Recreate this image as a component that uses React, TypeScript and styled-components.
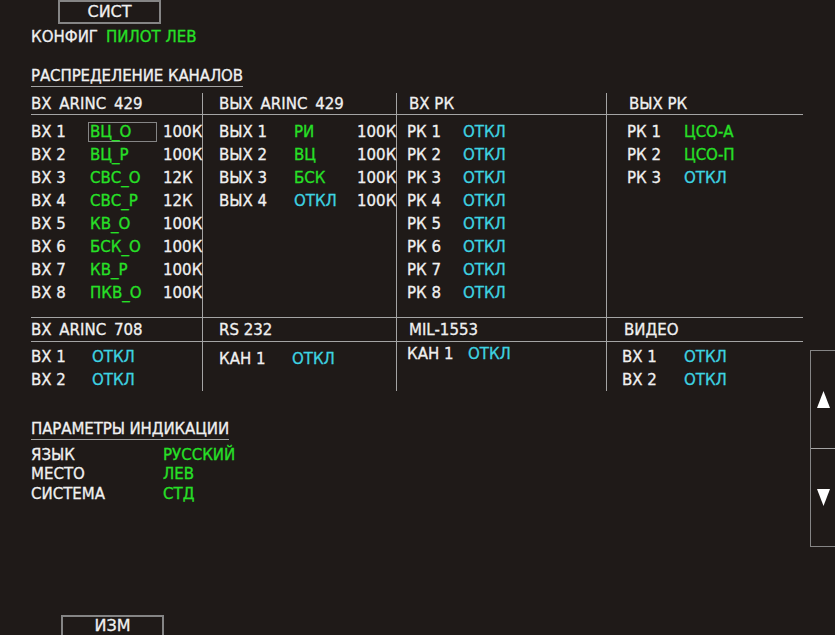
import React from 'react';
import styled, { createGlobalStyle } from 'styled-components';

// ---------------------------------------------------------------------------
// palette
// ---------------------------------------------------------------------------

const BG = '#1f1a18';
const WHITE = '#f0f0f0';
const GREEN = '#27e027';
const CYAN = '#3ed4e2';
const LINE = '#a4a4a4';
const FRAME = '#858585';

const GlobalStyle = createGlobalStyle`
  html, body {
    margin: 0;
    padding: 0;
    background: ${BG};
  }
  * { box-sizing: border-box; }
`;

// ---------------------------------------------------------------------------
// layout
// ---------------------------------------------------------------------------

const Screen = styled.div`
  width: 835px;
  height: 635px;
  overflow: hidden;
  display: flex;
  background: ${BG};
  color: ${WHITE};
  font-family: 'DejaVu Sans', 'Liberation Sans', sans-serif;
  font-size: 15px;
  line-height: 18px;
  -webkit-text-stroke: 0.3px currentColor;
`;

const Main = styled.div`
  flex: none;
  width: 810px;
  height: 635px;
  display: flex;
  flex-direction: column;
`;

const SoftKey = styled.div<{ $bottom?: boolean }>`
  flex: none;
  width: 103px;
  height: ${(p) => (p.$bottom ? '20px' : '24px')};
  margin-left: ${(p) => (p.$bottom ? '61px' : '58px')};
  margin-top: ${(p) => (p.$bottom ? 'auto' : '0')};
  border: 2px solid ${FRAME};
  border-bottom: ${(p) => (p.$bottom ? 'none' : `2px solid ${FRAME}`)};
  display: flex;
  justify-content: center;
  align-items: ${(p) => (p.$bottom ? 'flex-end' : 'center')};
  font-size: 16px;
  color: ${WHITE};
`;

const ConfigLine = styled.div`
  padding-left: 31px;
  margin-top: 3px;
  line-height: 20px;
  display: flex;
  gap: 8px;
`;

const Value = styled.span<{ $tone?: 'green' | 'cyan' }>`
  color: ${(p) => (p.$tone === 'cyan' ? CYAN : GREEN)};
`;

const SectionTitle = styled.div<{ $top: number }>`
  align-self: flex-start;
  margin-left: 31px;
  margin-top: ${(p) => p.$top}px;
  padding-bottom: 1px;
  border-bottom: 1px solid ${LINE};
  letter-spacing: -0.1px;
`;

const ChannelGrid = styled.div`
  margin-top: 6px;
  margin-left: 31px;
  width: 772px;
  display: grid;
  grid-template-columns: 172px 194px 210px 196px;
  grid-template-rows: 22px 202px 25px 49px;
`;

const Cell = styled.div<{ $kind: 'head' | 'body' | 'head2'; $pad: number; $last?: boolean; $top?: number }>`
  padding-left: ${(p) => p.$pad}px;
  padding-top: ${(p) => p.$top ?? 0}px;
  border-right: ${(p) => (p.$last ? 'none' : `1px solid ${LINE}`)};
  border-top: ${(p) => (p.$kind === 'head2' ? `1px solid ${LINE}` : 'none')};
  border-bottom: ${(p) => (p.$kind === 'body' ? 'none' : `1px solid ${LINE}`)};
  display: flex;
  flex-direction: column;
  justify-content: ${(p) => (p.$kind === 'body' ? 'flex-start' : 'center')};
`;

const HeadText = styled.span`
  word-spacing: 3px;
`;

const Row = styled.div<{ $cols: string; $h: number }>`
  display: grid;
  grid-template-columns: ${(p) => p.$cols};
  height: ${(p) => p.$h}px;
  align-items: center;
  white-space: nowrap;
`;

const ChanValue = styled.span<{ $tone: 'green' | 'cyan'; $selected?: boolean }>`
  color: ${(p) => (p.$tone === 'cyan' ? CYAN : GREEN)};
  justify-self: start;
  width: ${(p) => (p.$selected ? '69px' : 'auto')};
  height: 20px;
  line-height: 18px;
  margin-left: -1px;
  padding-left: 1px;
  border: 1px solid ${(p) => (p.$selected ? FRAME : 'transparent')};
`;

const ParamList = styled.div`
  margin-top: 5px;
  padding-left: 31px;
  display: flex;
  flex-direction: column;
`;

const ParamRow = styled.div`
  display: grid;
  grid-template-columns: 132px auto;
  height: 19.5px;
  align-items: center;
`;

const Rail = styled.div`
  flex: none;
  width: 25px;
  padding-top: 350px;
`;

const ScrollBox = styled.div`
  width: 30px;
  height: 197px;
  border: 1px solid ${FRAME};
  display: flex;
  flex-direction: column;
`;

const ScrollKey = styled.div<{ $first?: boolean }>`
  flex: 1;
  display: flex;
  align-items: center;
  padding-left: 6px;
  border-bottom: ${(p) => (p.$first ? `1px solid ${LINE}` : 'none')};
`;

// ---------------------------------------------------------------------------
// data
// ---------------------------------------------------------------------------

type Tone = 'green' | 'cyan';
type Chan = { label: string; value: string; tone: Tone; speed?: string; selected?: boolean };

const arincIn: Chan[] = [
  { label: 'ВХ 1', value: 'ВЦ_О', tone: 'green', speed: '100К', selected: true },
  { label: 'ВХ 2', value: 'ВЦ_Р', tone: 'green', speed: '100К' },
  { label: 'ВХ 3', value: 'СВС_О', tone: 'green', speed: '12К' },
  { label: 'ВХ 4', value: 'СВС_Р', tone: 'green', speed: '12К' },
  { label: 'ВХ 5', value: 'КВ_О', tone: 'green', speed: '100К' },
  { label: 'ВХ 6', value: 'БСК_О', tone: 'green', speed: '100К' },
  { label: 'ВХ 7', value: 'КВ_Р', tone: 'green', speed: '100К' },
  { label: 'ВХ 8', value: 'ПКВ_О', tone: 'green', speed: '100К' },
];

const arincOut: Chan[] = [
  { label: 'ВЫХ 1', value: 'РИ', tone: 'green', speed: '100К' },
  { label: 'ВЫХ 2', value: 'ВЦ', tone: 'green', speed: '100К' },
  { label: 'ВЫХ 3', value: 'БСК', tone: 'green', speed: '100К' },
  { label: 'ВЫХ 4', value: 'ОТКЛ', tone: 'cyan', speed: '100К' },
];

const rkIn: Chan[] = [1, 2, 3, 4, 5, 6, 7, 8].map((n) => ({
  label: `РК ${n}`,
  value: 'ОТКЛ',
  tone: 'cyan' as Tone,
}));

const rkOut: Chan[] = [
  { label: 'РК 1', value: 'ЦСО-А', tone: 'green' },
  { label: 'РК 2', value: 'ЦСО-П', tone: 'green' },
  { label: 'РК 3', value: 'ОТКЛ', tone: 'cyan' },
];

const arinc708: Chan[] = [
  { label: 'ВХ 1', value: 'ОТКЛ', tone: 'cyan' },
  { label: 'ВХ 2', value: 'ОТКЛ', tone: 'cyan' },
];

const rs232: Chan[] = [{ label: 'КАН 1', value: 'ОТКЛ', tone: 'cyan' }];
const mil1553: Chan[] = [{ label: 'КАН 1', value: 'ОТКЛ', tone: 'cyan' }];
const video: Chan[] = arinc708;

const params = [
  { label: 'ЯЗЫК', value: 'РУССКИЙ' },
  { label: 'МЕСТО', value: 'ЛЕВ' },
  { label: 'СИСТЕМА', value: 'СТД' },
];

// ---------------------------------------------------------------------------
// components
// ---------------------------------------------------------------------------

const ChannelRows: React.FC<{ items: Chan[]; cols: string; h: number }> = ({ items, cols, h }) => (
  <>
    {items.map((c) => (
      <Row key={c.label} $cols={cols} $h={h}>
        <span>{c.label}</span>
        <ChanValue $tone={c.tone} $selected={c.selected}>
          {c.value}
        </ChanValue>
        {c.speed && <span>{c.speed}</span>}
      </Row>
    ))}
  </>
);

const Triangle: React.FC<{ down?: boolean }> = ({ down }) => (
  <svg width="13" height="17" viewBox="0 0 13 17">
    <polygon points={down ? '0,0 13,0 6.5,17' : '6.5,0 13,17 0,17'} fill="#ffffff" />
  </svg>
);

const App: React.FC = () => (
  <>
    <GlobalStyle />
    <Screen>
      <Main>
        <SoftKey>СИСТ</SoftKey>

        <ConfigLine>
          <span>КОНФИГ</span>
          <Value>ПИЛОТ ЛЕВ</Value>
        </ConfigLine>

        <SectionTitle $top={20}>РАСПРЕДЕЛЕНИЕ КАНАЛОВ</SectionTitle>

        <ChannelGrid>
          <Cell $kind="head" $pad={0}><HeadText>ВХ ARINC 429</HeadText></Cell>
          <Cell $kind="head" $pad={16}><HeadText>ВЫХ ARINC 429</HeadText></Cell>
          <Cell $kind="head" $pad={12}><span>ВХ РК</span></Cell>
          <Cell $kind="head" $pad={22} $last><span>ВЫХ РК</span></Cell>

          <Cell $kind="body" $pad={0} $top={5}>
            <ChannelRows items={arincIn} cols="58px 74px auto" h={23} />
          </Cell>
          <Cell $kind="body" $pad={16} $top={5}>
            <ChannelRows items={arincOut} cols="74px 64px auto" h={23} />
          </Cell>
          <Cell $kind="body" $pad={10} $top={5}>
            <ChannelRows items={rkIn} cols="55px auto" h={23} />
          </Cell>
          <Cell $kind="body" $pad={20} $top={5} $last>
            <ChannelRows items={rkOut} cols="56px auto" h={23} />
          </Cell>

          <Cell $kind="head2" $pad={0}><HeadText>ВХ ARINC 708</HeadText></Cell>
          <Cell $kind="head2" $pad={16}><span>RS 232</span></Cell>
          <Cell $kind="head2" $pad={12}><span>MIL-1553</span></Cell>
          <Cell $kind="head2" $pad={17} $last><span>ВИДЕО</span></Cell>

          <Cell $kind="body" $pad={0} $top={4}>
            <ChannelRows items={arinc708} cols="60px auto" h={24} />
          </Cell>
          <Cell $kind="body" $pad={16} $top={5}>
            <ChannelRows items={rs232} cols="72px auto" h={24} />
          </Cell>
          <Cell $kind="body" $pad={10} $top={0}>
            <ChannelRows items={mil1553} cols="60px auto" h={24} />
          </Cell>
          <Cell $kind="body" $pad={15} $top={4} $last>
            <ChannelRows items={video} cols="61px auto" h={24} />
          </Cell>
        </ChannelGrid>

        <SectionTitle $top={29}>ПАРАМЕТРЫ ИНДИКАЦИИ</SectionTitle>

        <ParamList>
          {params.map((p) => (
            <ParamRow key={p.label}>
              <span>{p.label}</span>
              <Value>{p.value}</Value>
            </ParamRow>
          ))}
        </ParamList>

        <SoftKey $bottom>ИЗМ</SoftKey>
      </Main>

      <Rail>
        <ScrollBox>
          <ScrollKey $first><Triangle /></ScrollKey>
          <ScrollKey><Triangle down /></ScrollKey>
        </ScrollBox>
      </Rail>
    </Screen>
  </>
);

export default App;
